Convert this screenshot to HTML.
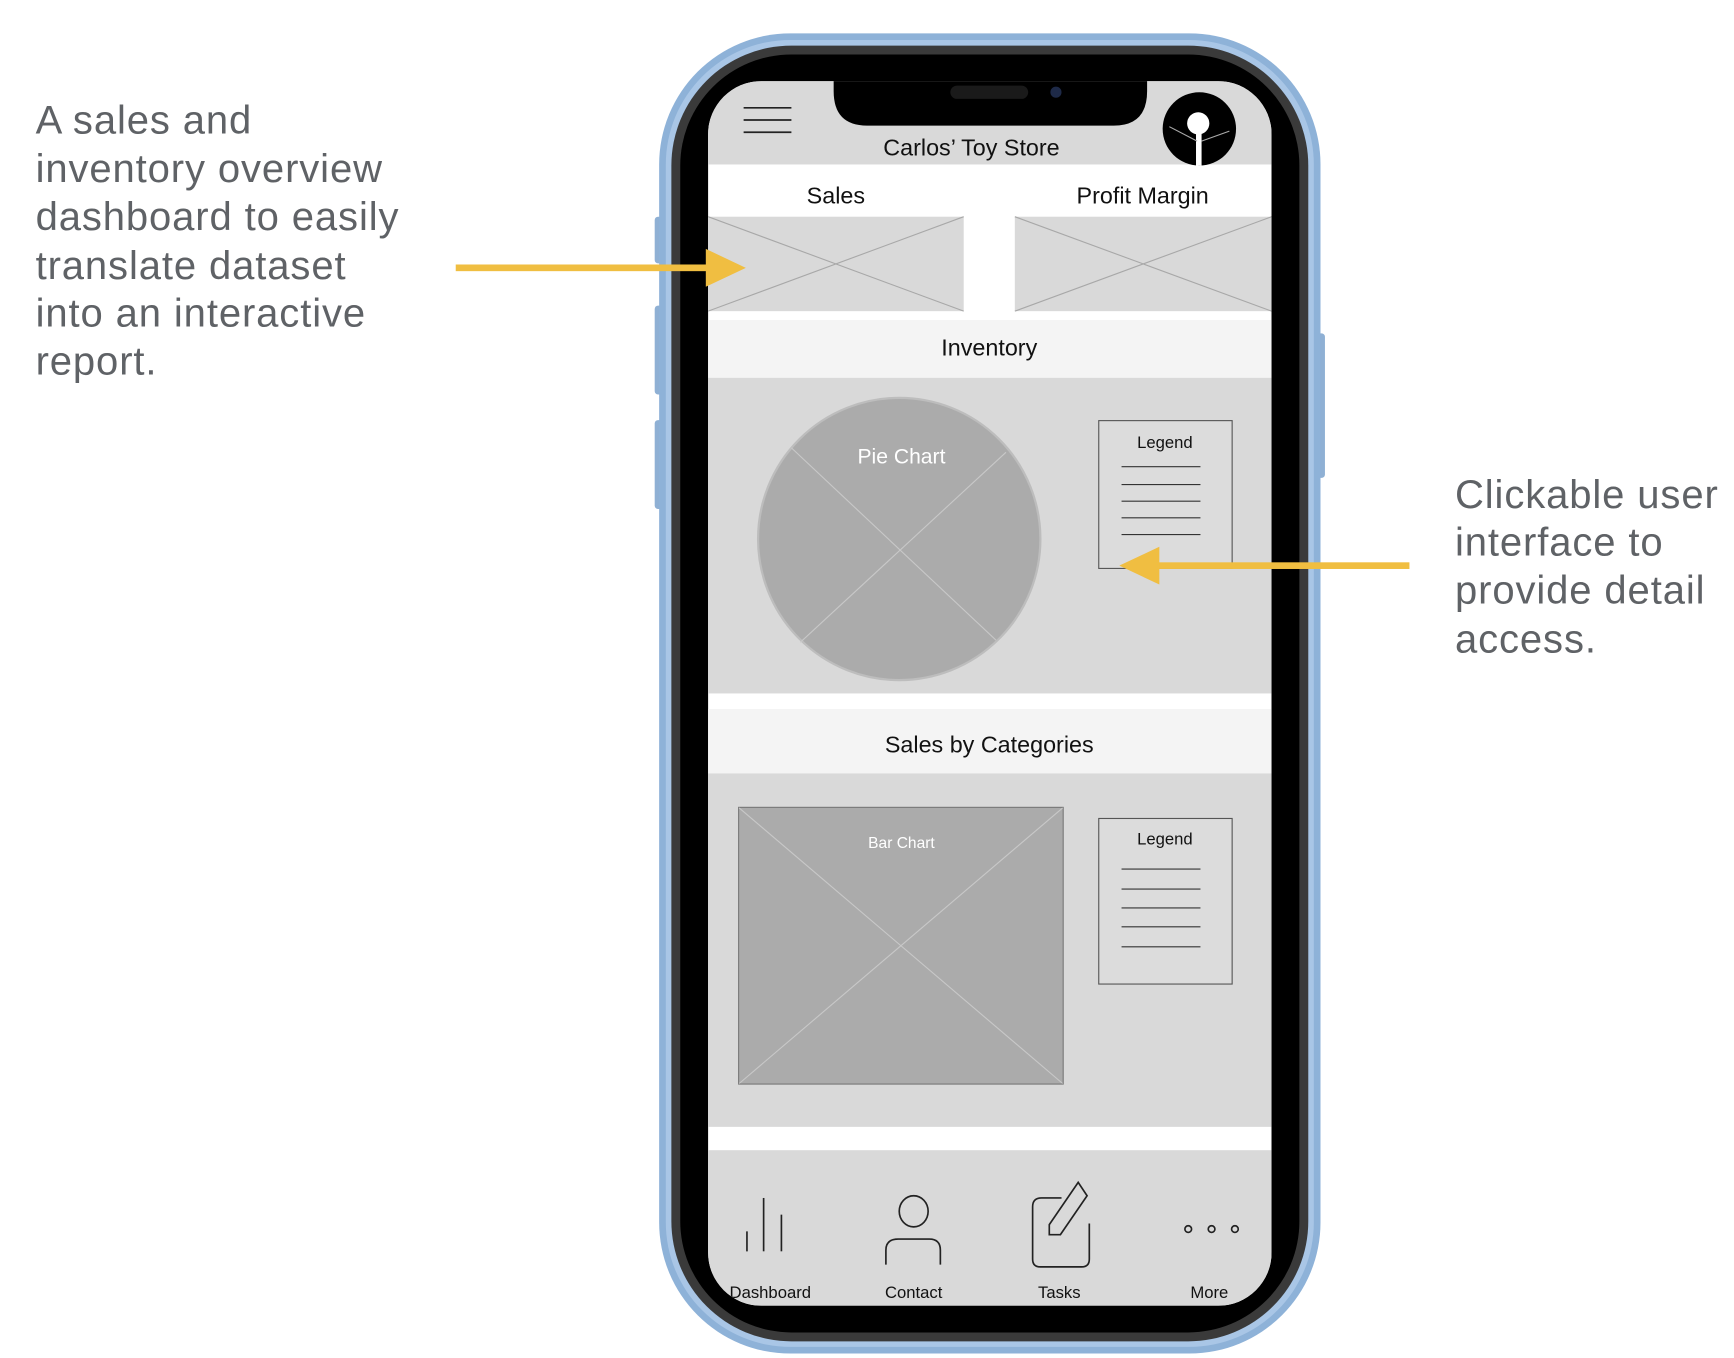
<!DOCTYPE html>
<html><head><meta charset="utf-8"><style>
html,body{margin:0;padding:0;background:#fff;}
svg{display:block}
text{font-family:"Liberation Sans",sans-serif;}
</style></head><body>
<svg width="1734" height="1358" viewBox="0 0 1560 1222" preserveAspectRatio="none" xmlns="http://www.w3.org/2000/svg">
<rect width="1560" height="1222" fill="#fff"/>
<g fill="#5f6266" font-size="36" letter-spacing="0.8">
<text x="32" y="120">A sales and</text>
<text x="32" y="164">inventory overview</text>
<text x="32" y="207">dashboard to easily</text>
<text x="32" y="251">translate dataset</text>
<text x="32" y="294">into an interactive</text>
<text x="32" y="337">report.</text>
<text x="1309" y="457">Clickable user</text>
<text x="1309" y="500">interface to</text>
<text x="1309" y="543">provide detail</text>
<text x="1309" y="587">access.</text>
</g>
<g fill="#8fb0d4">
<rect x="589" y="195" width="10" height="42" rx="3"/>
<rect x="589" y="275" width="10" height="80" rx="3"/>
<rect x="589" y="378" width="10" height="80" rx="3"/>
<rect x="1182" y="300" width="10" height="130" rx="3"/>
</g>
<rect x="593" y="30" width="595" height="1188" rx="118" fill="#8eb2d8"/>
<rect x="599" y="36" width="583" height="1176" rx="112" fill="#a9c6e6"/>
<rect x="604" y="41" width="573" height="1166" rx="108" fill="#3a3a3a"/>
<rect x="612" y="49" width="557" height="1150" rx="100" fill="#000"/>
<clipPath id="scr"><rect x="637" y="73" width="507" height="1102" rx="48"/></clipPath>
<g clip-path="url(#scr)">
<rect x="637" y="73" width="507" height="1102" fill="#fff"/>
<rect x="637" y="73" width="507" height="75" fill="#d9d9d9"/>
<rect x="637" y="195" width="230" height="85" fill="#d9d9d9"/>
<rect x="913" y="195" width="231" height="85" fill="#d9d9d9"/>
<g stroke="#a8a8a8" stroke-width="1">
<line x1="637" y1="195" x2="867" y2="280"/><line x1="867" y1="195" x2="637" y2="280"/>
<line x1="913" y1="195" x2="1144" y2="280"/><line x1="1144" y1="195" x2="913" y2="280"/>
</g>
<rect x="637" y="288" width="507" height="52" fill="#f4f4f4"/>
<rect x="637" y="340" width="507" height="284" fill="#d9d9d9"/>
<rect x="637" y="638" width="507" height="58" fill="#f4f4f4"/>
<rect x="637" y="696" width="507" height="318" fill="#d9d9d9"/>
<rect x="637" y="1035" width="507" height="140" fill="#d9d9d9"/>
<circle cx="809" cy="485" r="127" fill="#ababab" stroke="#bdbdbd" stroke-width="2"/>
<g stroke="#c8c8c8" stroke-width="1">
<line x1="712" y1="403" x2="896" y2="576"/><line x1="905" y1="407" x2="720" y2="578"/>
</g>
<text x="811" y="417" font-size="19" fill="#fff" text-anchor="middle">Pie Chart</text>
<rect x="988.5" y="378.5" width="120" height="133" fill="#dcdcdc" stroke="#555"/>
<text x="1048" y="403" font-size="15" fill="#111" text-anchor="middle">Legend</text>
<g stroke="#333" stroke-width="1">
<line x1="1009" y1="420" x2="1080" y2="420"/><line x1="1009" y1="436" x2="1080" y2="436"/>
<line x1="1009" y1="451" x2="1080" y2="451"/><line x1="1009" y1="466" x2="1080" y2="466"/>
<line x1="1009" y1="481" x2="1080" y2="481"/>
</g>
<rect x="664.5" y="726.5" width="292" height="249" fill="#ababab" stroke="#777"/>
<g stroke="#c8c8c8" stroke-width="1">
<line x1="665" y1="727" x2="956" y2="975"/><line x1="956" y1="727" x2="665" y2="975"/>
</g>
<text x="811" y="763" font-size="14" fill="#fff" text-anchor="middle">Bar Chart</text>
<rect x="988.5" y="736.5" width="120" height="149" fill="#dcdcdc" stroke="#555"/>
<text x="1048" y="760" font-size="15" fill="#111" text-anchor="middle">Legend</text>
<g stroke="#333" stroke-width="1">
<line x1="1009" y1="782" x2="1080" y2="782"/><line x1="1009" y1="800" x2="1080" y2="800"/>
<line x1="1009" y1="817" x2="1080" y2="817"/><line x1="1009" y1="834" x2="1080" y2="834"/>
<line x1="1009" y1="852" x2="1080" y2="852"/>
</g>
<g fill="#111" font-size="21" text-anchor="middle">
<text x="874" y="140">Carlos’ Toy Store</text>
<text x="752" y="183">Sales</text>
<text x="1028" y="183">Profit Margin</text>
<text x="890" y="320">Inventory</text>
<text x="890" y="677">Sales by Categories</text>
</g>
<g stroke="#222" stroke-width="1.5">
<line x1="669" y1="97" x2="712" y2="97"/><line x1="669" y1="108" x2="712" y2="108"/><line x1="669" y1="119" x2="712" y2="119"/>
</g>
<ellipse cx="1079" cy="116" rx="33" ry="33" fill="#000"/>
<circle cx="1078" cy="111" r="10" fill="#fff"/>
<rect x="1076" y="115" width="5" height="34" fill="#fff"/>
<g stroke="#aaa" stroke-width="1"><line x1="1052" y1="114" x2="1077" y2="127"/><line x1="1081" y1="127" x2="1106" y2="118"/></g>
<path d="M750 60 L1032 60 L1032 82 Q1032 113 1002 113 L780 113 Q750 113 750 82 Z" fill="#000"/>
<rect x="855" y="77" width="70" height="12" rx="6" fill="#1a1a1a"/>
<circle cx="950" cy="83" r="5" fill="#1e2a48"/>
<g stroke="#222" stroke-width="1.5" fill="none">
<line x1="672" y1="1108" x2="672" y2="1126"/><line x1="687" y1="1078" x2="687" y2="1126"/><line x1="703" y1="1093" x2="703" y2="1126"/>
<ellipse cx="822" cy="1090" rx="13" ry="14"/>
<path d="M797 1138 V1125 Q797 1115 808 1115 H836 Q846 1115 846 1125 V1138"/>
<path d="M955 1078 H937 Q929 1078 929 1086 V1133 Q929 1140 936 1140 H973 Q980 1140 980 1133 V1101"/>
<path d="M944 1102 L970 1064 L978 1076 L954 1111 H944 Z"/>
<circle cx="1069" cy="1106" r="3"/><circle cx="1090" cy="1106" r="3"/><circle cx="1111" cy="1106" r="3"/>
</g>
<g fill="#111" font-size="15" text-anchor="middle">
<text x="693" y="1168">Dashboard</text>
<text x="822" y="1168">Contact</text>
<text x="953" y="1168">Tasks</text>
<text x="1088" y="1168">More</text>
</g>
</g>
<g fill="#f0be41">
<rect x="410" y="238" width="230" height="6"/>
<polygon points="635,224 671,241 635,258"/>
<rect x="1038" y="506" width="230" height="6"/>
<polygon points="1043,492 1007,509 1043,526"/>
</g>
</svg>
</body></html>
